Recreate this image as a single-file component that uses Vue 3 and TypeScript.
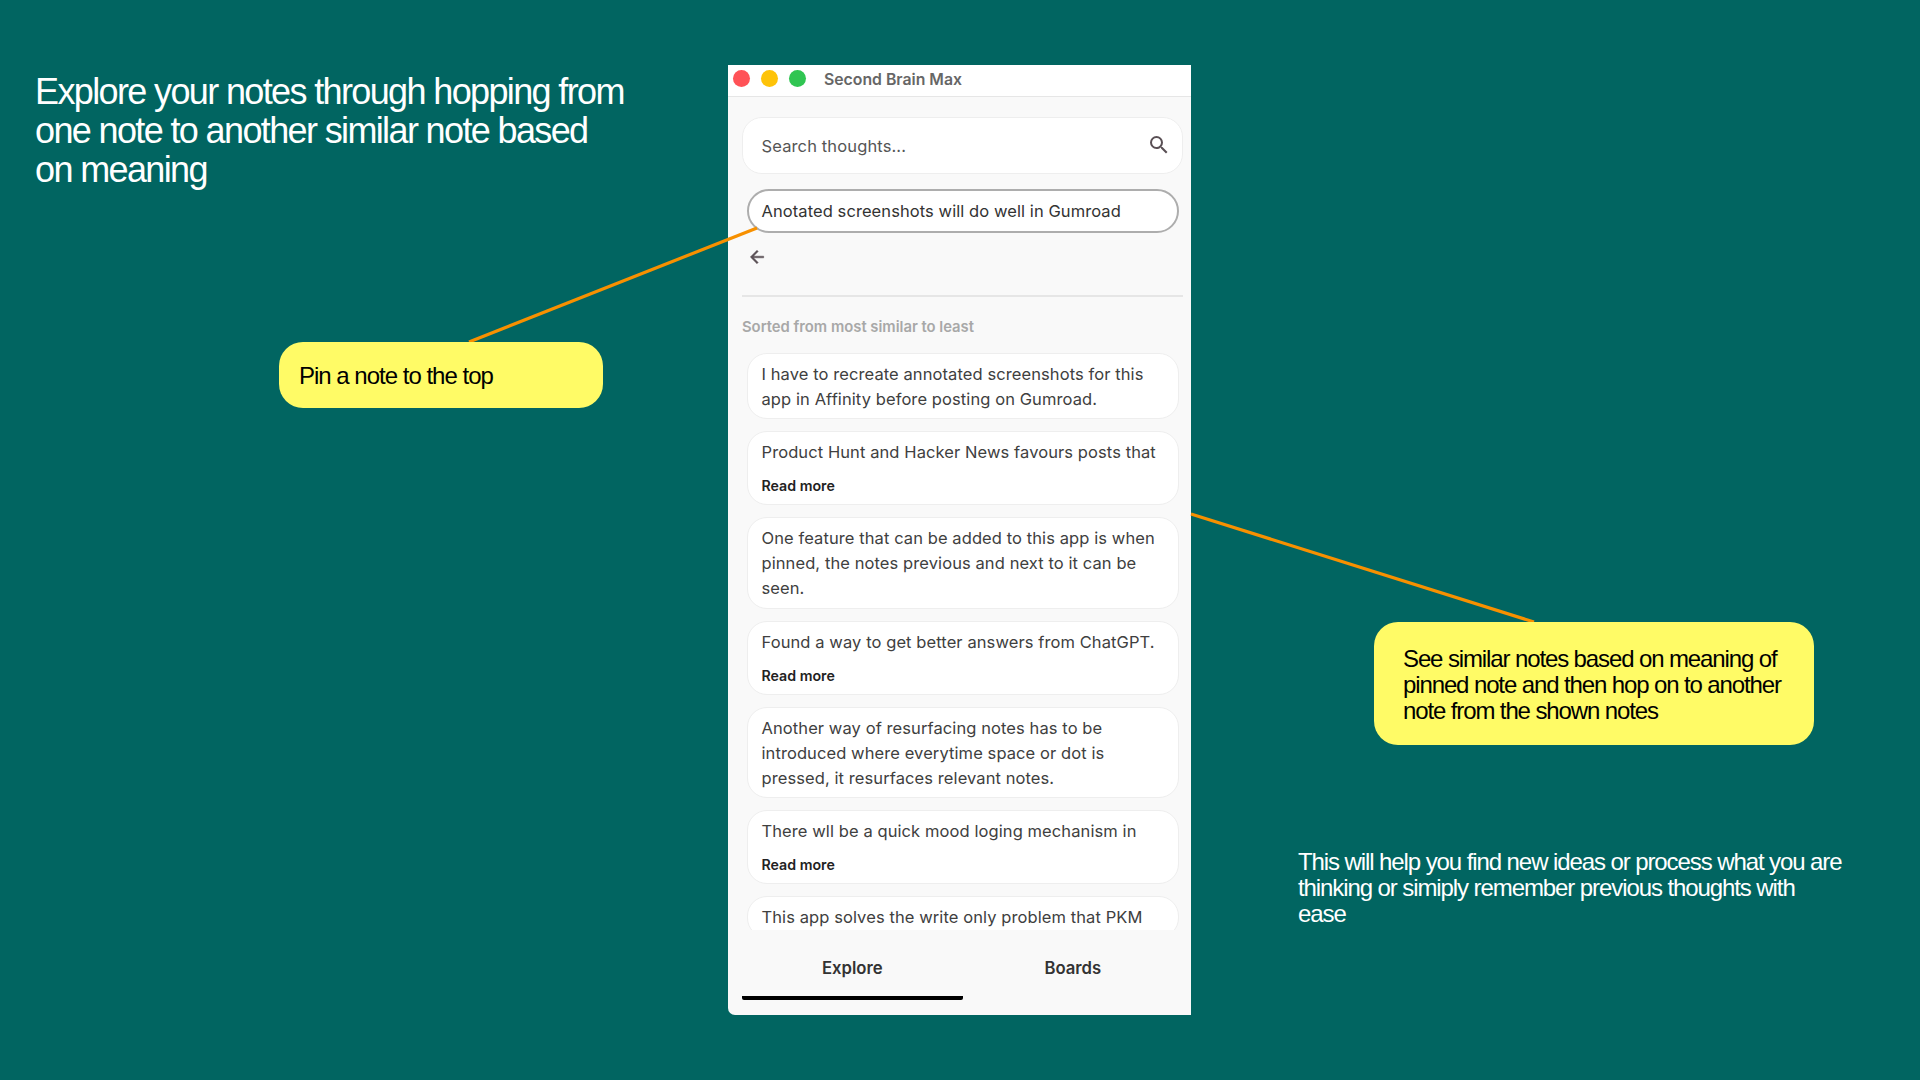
<script setup lang="ts">
interface Note {
  lines: string[]
  more?: boolean
}
const notes: Note[] = [
  { lines: ['I have to recreate annotated screenshots for this', 'app in Affinity before posting on Gumroad.'] },
  { lines: ['Product Hunt and Hacker News favours posts that'], more: true },
  { lines: ['One feature that can be added to this app is when', 'pinned, the notes previous and next to it can be', 'seen.'] },
  { lines: ['Found a way to get better answers from ChatGPT.'], more: true },
  { lines: ['Another way of resurfacing notes has to be', 'introduced where everytime space or dot is', 'pressed, it resurfaces relevant notes.'] },
  { lines: ['There wll be a quick mood loging mechanism in'], more: true },
  { lines: ['This app solves the write only problem that PKM'] },
]
</script>

<template>
  <main class="slide">
    <h1 class="headline">Explore your notes through hopping from<br />one note to another similar note based<br />on meaning</h1>

    <section class="window">
      <header class="titlebar">
        <span class="light red"></span>
        <span class="light amber"></span>
        <span class="light green"></span>
        <span class="app-title">Second Brain Max</span>
      </header>
      <div class="content">
        <div class="search">
          <span class="search-text">Search thoughts...</span>
          <svg class="search-icon" viewBox="0 0 24 24"><path d="M15.5 14h-.79l-.28-.27A6.471 6.471 0 0 0 16 9.5 6.5 6.5 0 1 0 9.5 16c1.61 0 3.09-.59 4.23-1.57l.27.28v.79l5 4.99L20.49 19l-4.99-5zm-6 0C7.01 14 5 11.99 5 9.5S7.01 5 9.5 5 14 7.01 14 9.5 11.99 14 9.5 14z" /></svg>
        </div>
        <div class="pinned">Anotated screenshots will do well in Gumroad</div>
        <svg class="back" viewBox="0 0 24 24"><path d="M20 11H7.83l5.59-5.59L12 4l-8 8 8 8 1.41-1.41L7.83 13H20v-2z" /></svg>
        <div class="divider"></div>
        <p class="sorted">Sorted from most similar to least</p>
        <div class="list">
          <article v-for="(note, i) in notes" :key="i" class="card">
            <p v-for="line in note.lines" :key="line" class="line">{{ line }}</p>
            <p v-if="note.more" class="more">Read more</p>
          </article>
        </div>
        <nav class="tabs">
          <div class="tab active">Explore</div>
          <div class="tab">Boards</div>
        </nav>
      </div>
    </section>

    <svg class="connectors" viewBox="0 0 1920 1080">
      <line x1="757" y1="228" x2="469" y2="342" />
      <line x1="1191" y1="514" x2="1534" y2="622" />
    </svg>

    <aside class="callout callout-pin">Pin a note to the top</aside>
    <aside class="callout callout-similar">See similar notes based on meaning of<br />pinned note and then hop on to another<br />note from the shown notes</aside>

    <p class="aside-note">This will help you find new ideas or process what you are<br />thinking or simiply remember previous thoughts with<br />ease</p>
  </main>
</template>

<style>
html, body { margin: 0; padding: 0; background: #016561; }
</style>

<style scoped>
.slide {
  position: relative;
  width: 1920px;
  height: 1080px;
  overflow: hidden;
  background: #016561;
  font-family: "Liberation Sans", Arial, sans-serif;
}
.headline {
  position: absolute;
  left: 35px;
  top: 72px;
  margin: 0;
  font-size: 36px;
  font-weight: 400;
  line-height: 39px;
  letter-spacing: -1.63px;
  color: #fff;
  white-space: nowrap;
}
.window {
  position: absolute;
  left: 728px;
  top: 65px;
  width: 463px;
  height: 950px;
  display: flex;
  flex-direction: column;
  background: #f9f9f9;
  border-bottom-left-radius: 7px;
  overflow: hidden;
  font-family: Inter, "Liberation Sans", sans-serif;
}
.titlebar {
  height: 32px;
  flex: none;
  display: flex;
  align-items: center;
  padding-left: 5px;
  background: #fff;
  border-bottom: 1px solid #e6e6e6;
  box-sizing: border-box;
}
.light {
  width: 17px;
  height: 17px;
  border-radius: 50%;
  margin-right: 11px;
  margin-top: -5px;
}
.red { background: #ff5257; }
.amber { background: #fec309; }
.green { background: #30c552; margin-right: 18px; }
.app-title {
  font-size: 15.8px;
  font-weight: 600;
  color: #666;
  margin-top: -3px;
}
.content {
  flex: 1;
  min-height: 0;
  display: flex;
  flex-direction: column;
  padding: 20px 8px 0 14px;
}
.search {
  height: 57px;
  flex: none;
  box-sizing: border-box;
  display: flex;
  align-items: center;
  justify-content: space-between;
  padding: 0 11px 0 18.5px;
  background: #fff;
  border: 1px solid #eeeeee;
  border-radius: 20px;
  font-size: 16.5px;
  letter-spacing: 0.13px;
  color: #555;
}
.search-text { margin-top: 1px; }
.search-icon { width: 24px; height: 24px; fill: #5a5055; margin-top: -2px; }
.pinned {
  height: 44px;
  flex: none;
  box-sizing: border-box;
  margin: 15px 4.5px 0 5px;
  padding: 0 12px 0 12.5px;
  display: flex;
  align-items: center;
  background: #fff;
  border: 2.5px solid #adadad;
  border-radius: 22px;
  font-size: 16.5px;
  letter-spacing: 0.08px;
  color: #333;
}
.back { width: 20px; height: 20px; flex: none; fill: #5a5055; margin: 14px 0 0 5px; stroke: #5a5055; stroke-width: 0.6; }
.divider { height: 2px; flex: none; background: #e6e6e6; margin-top: 28px; }
.sorted {
  margin: 20.5px 0 0;
  height: 18px;
  line-height: 18px;
  flex: none;
  font-size: 14.8px;
  font-weight: 600;
  color: #a8a8a8;
}
.list {
  flex: none;
  height: 577.5px;
  margin-top: 17px;
  padding: 0 4.5px 0 5px;
  overflow: hidden;
  display: flex;
  flex-direction: column;
  gap: 12px;
}
.card {
  flex: none;
  box-sizing: border-box;
  padding: 8px 13px 6.5px 13.5px;
  background: #fff;
  border: 1px solid #eeeeee;
  border-radius: 20px;
}
.line {
  margin: 0;
  font-size: 16.5px;
  letter-spacing: 0.09px;
  line-height: 25px;
  color: #404040;
  white-space: nowrap;
}
.more {
  margin: 12px 0 2.5px;
  font-size: 14.2px;
  line-height: 18px;
  font-weight: 600;
  color: #222;
}
.tabs { display: flex; flex: 1; }
.tab {
  flex: 1;
  height: 70px;
  box-sizing: border-box;
  padding-top: 26px;
  text-align: center;
  font-size: 16.7px;
  line-height: 24px;
  font-weight: 600;
  color: #333;
}
.active { border-bottom: 4px solid #000; border-radius: 0 0 2px 2px; }
.connectors {
  position: absolute;
  inset: 0;
  width: 1920px;
  height: 1080px;
  pointer-events: none;
}
.connectors line { stroke: #f79000; stroke-width: 3.2; }
.callout {
  position: absolute;
  box-sizing: border-box;
  background: #fffb66;
  color: #000;
  border-radius: 24px;
  font-size: 24px;
  line-height: 26px;
  letter-spacing: -1.12px;
  white-space: nowrap;
}
.callout-pin {
  left: 279px;
  top: 342px;
  width: 324px;
  height: 66px;
  padding: 21px 20px 0;
  letter-spacing: -1px;
}
.callout-similar {
  left: 1374px;
  top: 622px;
  width: 440px;
  height: 123px;
  padding: 24px 29px 0;
}
.aside-note {
  position: absolute;
  left: 1298px;
  top: 849px;
  margin: 0;
  color: #fff;
  font-size: 24px;
  line-height: 26px;
  letter-spacing: -1.09px;
  white-space: nowrap;
}
</style>
